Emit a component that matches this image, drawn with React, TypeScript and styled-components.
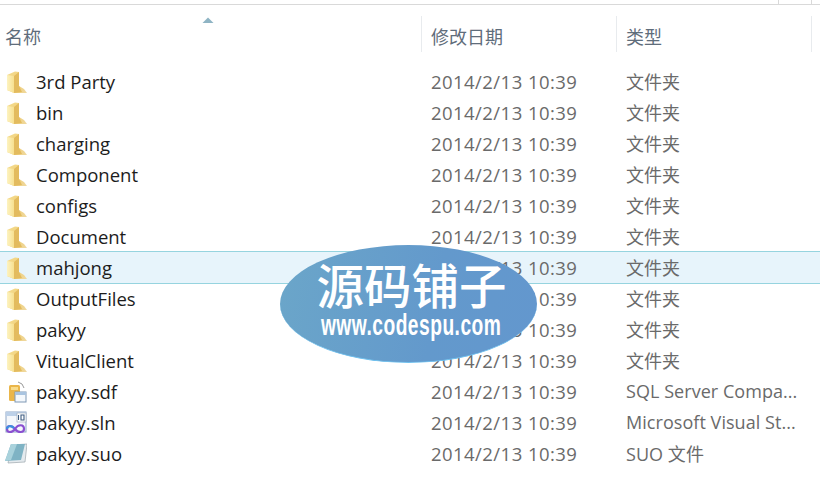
import React from 'react';
import styled, { createGlobalStyle } from 'styled-components';

const GlobalStyle = createGlobalStyle`
  html, body {
    margin: 0;
    padding: 0;
    background: #fff;
    overflow: hidden;
  }
  body {
    font-family: 'Open Sans', 'Noto Sans', 'Noto Sans CJK SC', sans-serif;
  }
`;

const Page = styled.div`
  position: relative;
  width: 820px;
  height: 483px;
  overflow: hidden;
  background: #fff;
`;

const TopBar = styled.div`
  display: flex;
  justify-content: flex-end;
  height: 4px;
  padding-right: 8px;
  border-bottom: 1px solid #d9d9d9;
`;

const TopCell = styled.div`
  width: 32px;
  border-left: 1px solid #d9d9d9;
  border-right: 1px solid #d9d9d9;
`;

const Header = styled.div`
  position: relative;
  display: grid;
  grid-template-columns: 421px 195px 196px;
  height: 46px;
  margin-top: 11px;
  margin-bottom: 4px;
`;

const HeaderCell = styled.div<{ $divider?: boolean }>`
  display: flex;
  align-items: center;
  box-sizing: border-box;
  padding-left: ${({ $divider }) => ($divider ? '9px' : '5px')};
  padding-top: 4px;
  height: 36px;
  font-family: 'Noto Sans CJK SC', sans-serif;
  font-size: 18px;
  color: #5f6d7b;
  border-left: ${({ $divider }) => ($divider ? '1px solid #e8ebee' : 'none')};
  &:last-child {
    border-right: 1px solid #e8ebee;
  }
`;

const SortArrow = styled.svg`
  position: absolute;
  left: 202px;
  top: 1px;
`;

const Row = styled.div<{ $selected?: boolean }>`
  display: grid;
  grid-template-columns: 421px 195px 1fr;
  align-items: center;
  height: 31px;
  box-sizing: border-box;
  ${({ $selected }) =>
    $selected &&
    `
    background: #e7f4fb;
    outline: 1px solid #96d4df;
  `}
`;

const NameCell = styled.div`
  display: flex;
  align-items: center;
  padding-left: 5px;
  gap: 9px;
  font-size: 18.5px;
  color: #1c1c1c;
`;

const IconSlot = styled.svg`
  flex: none;
  width: 22px;
  height: 24px;
`;

const DateCell = styled.div`
  padding-left: 10px;
  font-size: 18.5px;
  letter-spacing: 0.45px;
  color: #6a6a6a;
`;

const TypeCell = styled.div`
  padding-left: 10px;
  padding-bottom: 2px;
  font-family: 'Open Sans', 'Noto Sans CJK SC', sans-serif;
  font-size: 18px;
  letter-spacing: 0.05px;
  color: #6a6a6a;
  white-space: nowrap;
  overflow: hidden;
  max-width: 178px;
`;

const Watermark = styled.div`
  position: absolute;
  left: 280px;
  top: 245px;
  width: 257px;
  height: 118px;
  border-radius: 50%;
  background: linear-gradient(100deg, #6ba6c9 0%, #6399cc 60%, #6397ce 100%);
  border-bottom: 1px solid #6fc0ee;
  box-sizing: border-box;
  color: #fff;
  display: flex;
  flex-direction: column;
  align-items: center;
`;

const MarkTitle = styled.div`
  margin-top: 15px;
  padding-left: 6px;
  height: 48px;
  line-height: 48px;
  font-family: 'Noto Sans CJK SC', sans-serif;
  font-weight: 500;
  font-size: 47.5px;
  white-space: nowrap;
`;

const MarkUrl = styled.div`
  margin-top: 3px;
  padding-left: 6px;
  font-family: 'Liberation Sans', sans-serif;
  font-weight: 700;
  font-size: 24px;
  line-height: 27px;
  letter-spacing: 0.6px;
  white-space: nowrap;
  transform: scale(0.8, 1.25);
`;

const FolderIcon = () => (
  <IconSlot viewBox="0 0 22 24">
    <defs>
      <linearGradient id="folderBody" x1="0" y1="0" x2="1" y2="1">
        <stop offset="0" stopColor="#f5dc8e" />
        <stop offset="0.6" stopColor="#efcf7a" />
        <stop offset="1" stopColor="#efd9a2" />
      </linearGradient>
      <linearGradient id="folderFlap" x1="0" y1="0" x2="1" y2="0">
        <stop offset="0" stopColor="#fdf3c0" />
        <stop offset="1" stopColor="#f7e090" />
      </linearGradient>
    </defs>
    <path d="M2 5 L10 1.5 L14 2 L14 16 L19 19 L22 23 L9 23 L2 20 Z" fill="url(#folderBody)" />
    <path d="M2 5 L2 20 L9 23 L9 6 Z" fill="url(#folderFlap)" />
    <path d="M9 6 L14 2 L14 16 L17 22 L9 23 Z" fill="#e3bb5e" />
  </IconSlot>
);

const SdfIcon = () => (
  <IconSlot viewBox="0 0 22 24">
    <path d="M13 2 q5 1 6 6" fill="none" stroke="#9a9a9a" strokeWidth="1" />
    <rect x="4" y="5" width="11" height="16" rx="1.5" fill="#eab64a" />
    <rect x="6" y="7" width="7" height="3" fill="#f8dc8c" />
    <rect x="10" y="12" width="11" height="10" fill="#f4f8fc" stroke="#7e98b5" />
    <rect x="10" y="12" width="11" height="3" fill="#a9c4e0" />
  </IconSlot>
);

const SlnIcon = () => (
  <IconSlot viewBox="0 0 22 24">
    <rect x="1" y="1" width="20" height="20" fill="#f4f7fb" stroke="#8ea6c6" />
    <rect x="1" y="1" width="20" height="4" fill="#bcd0e8" />
    <rect x="12" y="2" width="9" height="9" fill="#fff" stroke="#9aa7b6" strokeWidth="0.6" />
    <path d="M13.5 4 v5 M16 4 h3 v5 h-3 z" fill="none" stroke="#3d5b80" strokeWidth="1.1" />
    <path
      d="M2 18 c0 -4 5 -4 8 0 c3 4 9 4 9 0 c0 -5 -6 -5 -9 0 c-3 4 -8 4 -8 0 z"
      fill="none"
      stroke="#8a4fd0"
      strokeWidth="2.2"
    />
    <path d="M2 18 c0 -3 4 -4 7 -1" fill="none" stroke="#3a8fe0" strokeWidth="2.2" />
  </IconSlot>
);

const SuoIcon = () => (
  <IconSlot viewBox="0 0 22 24">
    <path d="M7 3 L22 2 L20 20 L3 21 Z" fill="#e4eaee" stroke="#9ca6ac" strokeWidth="0.7" />
    <path d="M6 2 L20 2 L16 18 L0 19 Z" fill="#7fb3c4" />
    <path d="M6 2 L12 2 L6 18 L0 19 Z" fill="#a9d2dc" />
  </IconSlot>
);

type FileRow = {
  name: string;
  type: string;
  icon: React.ReactNode;
  selected?: boolean;
};

const DATE = '2014/2/13 10:39';
const FOLDER = '文件夹';

const files: FileRow[] = [
  { name: '3rd Party', type: FOLDER, icon: <FolderIcon /> },
  { name: 'bin', type: FOLDER, icon: <FolderIcon /> },
  { name: 'charging', type: FOLDER, icon: <FolderIcon /> },
  { name: 'Component', type: FOLDER, icon: <FolderIcon /> },
  { name: 'configs', type: FOLDER, icon: <FolderIcon /> },
  { name: 'Document', type: FOLDER, icon: <FolderIcon /> },
  { name: 'mahjong', type: FOLDER, icon: <FolderIcon />, selected: true },
  { name: 'OutputFiles', type: FOLDER, icon: <FolderIcon /> },
  { name: 'pakyy', type: FOLDER, icon: <FolderIcon /> },
  { name: 'VitualClient', type: FOLDER, icon: <FolderIcon /> },
  { name: 'pakyy.sdf', type: 'SQL Server Compa...', icon: <SdfIcon /> },
  { name: 'pakyy.sln', type: 'Microsoft Visual St...', icon: <SlnIcon /> },
  { name: 'pakyy.suo', type: 'SUO 文件', icon: <SuoIcon /> },
];

const App = () => (
  <Page>
    <GlobalStyle />
    <TopBar>
      <TopCell />
    </TopBar>
    <Header>
      <SortArrow width="12" height="6" viewBox="0 0 12 6">
        <path d="M0.5 6 L6 0.5 L11.5 6 Z" fill="#8fb4c4" />
      </SortArrow>
      <HeaderCell>名称</HeaderCell>
      <HeaderCell $divider>修改日期</HeaderCell>
      <HeaderCell $divider>类型</HeaderCell>
    </Header>
    {files.map((file) => (
      <Row key={file.name} $selected={file.selected}>
        <NameCell>
          {file.icon}
          {file.name}
        </NameCell>
        <DateCell>{DATE}</DateCell>
        <TypeCell>{file.type}</TypeCell>
      </Row>
    ))}
    <Watermark>
      <MarkTitle>源码铺子</MarkTitle>
      <MarkUrl>www.codespu.com</MarkUrl>
    </Watermark>
  </Page>
);

export default App;
